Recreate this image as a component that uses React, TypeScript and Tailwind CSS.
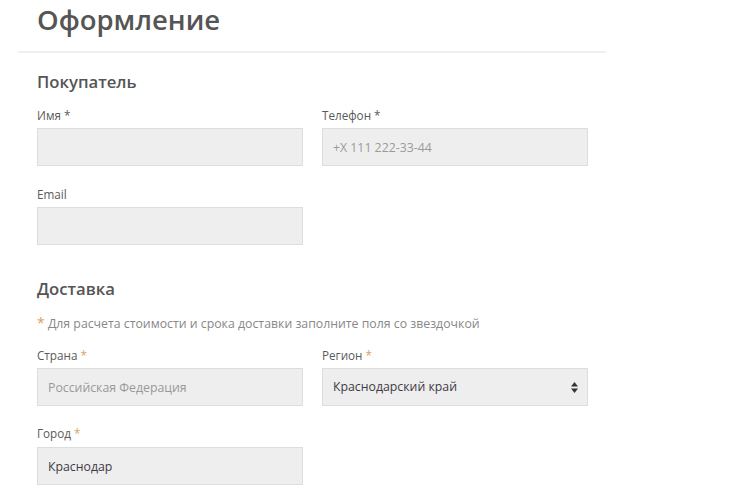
import React from "react";

function Label({ text, required, accent, mb = "mb-[3px]" }: { text: string; required?: boolean; accent?: boolean; mb?: string }) {
  return (
    <label className={"block text-[11.7px] leading-[20px] text-[#5a5a5a] " + mb}>
      {text}
      {required && <span className={accent ? "text-[#d9a35f]" : ""}> *</span>}
    </label>
  );
}

const inputCls =
  "block w-full h-[38px] px-[10px] bg-[#eeeeee] border border-[#dddddd] text-[12.3px] text-[#3f3a45] outline-none placeholder:text-[#9a9a9a]";

export default function App() {
  return (
    <div className="bg-white min-h-[500px] w-[752px] pl-[18px]" style={{ fontFamily: '"Open Sans", "Liberation Sans", sans-serif' }}>
      <div className="w-[588px]">
        <div className="pl-[19px] pt-[2px] pb-[13px] border-b-2 border-[#f0f0f0]">
          <h1 className="text-[27.5px] leading-[36px] font-semibold text-[#555]">Оформление</h1>
        </div>

        <div className="pl-[19px] pr-[18px]">
          <h2 className="mt-[17px] text-[16.7px] leading-[24px] font-semibold text-[#555]">Покупатель</h2>

          <div className="mt-[11px] grid grid-cols-2 gap-x-[19px] gap-y-[18px]">
            <div>
              <Label text="Имя" required />
              <input className={inputCls} />
            </div>
            <div>
              <Label text="Телефон" required />
              <input className={inputCls} placeholder="+X 111 222-33-44" />
            </div>
            <div>
              <Label text="Email" />
              <input className={inputCls} />
            </div>
          </div>

          <h2 className="mt-[32px] text-[16.7px] leading-[24px] font-semibold text-[#555]">Доставка</h2>

          <p className="mt-[12px] text-[12.3px] leading-[20px] text-[#888]">
            <span className="text-[#d9a35f] text-[14px]">*</span> Для расчета стоимости и срока доставки заполните поля со звездочкой
          </p>

          <div className="mt-[11px] grid grid-cols-2 gap-x-[19px] gap-y-[17px]">
            <div>
              <Label text="Страна" required accent mb="mb-[3px]" />
              <input className={inputCls + " text-[#999]"} value="Российская Федерация" disabled readOnly />
            </div>
            <div>
              <Label text="Регион" required accent mb="mb-[3px]" />
              <div className="relative">
                <select className={inputCls + " appearance-none"} defaultValue="krd">
                  <option value="krd">Краснодарский край</option>
                </select>
                <svg className="absolute right-[10px] top-[14px]" width="7" height="11" viewBox="0 0 7 11">
                  <path d="M3.5 0 L7 4.5 L0 4.5 Z" fill="#333" />
                  <path d="M3.5 11 L7 6.5 L0 6.5 Z" fill="#333" />
                </svg>
              </div>
            </div>
            <div>
              <Label text="Город" required accent mb="mb-[4px]" />
              <input className={inputCls} defaultValue="Краснодар" />
            </div>
          </div>
        </div>
      </div>
    </div>
  );
}
